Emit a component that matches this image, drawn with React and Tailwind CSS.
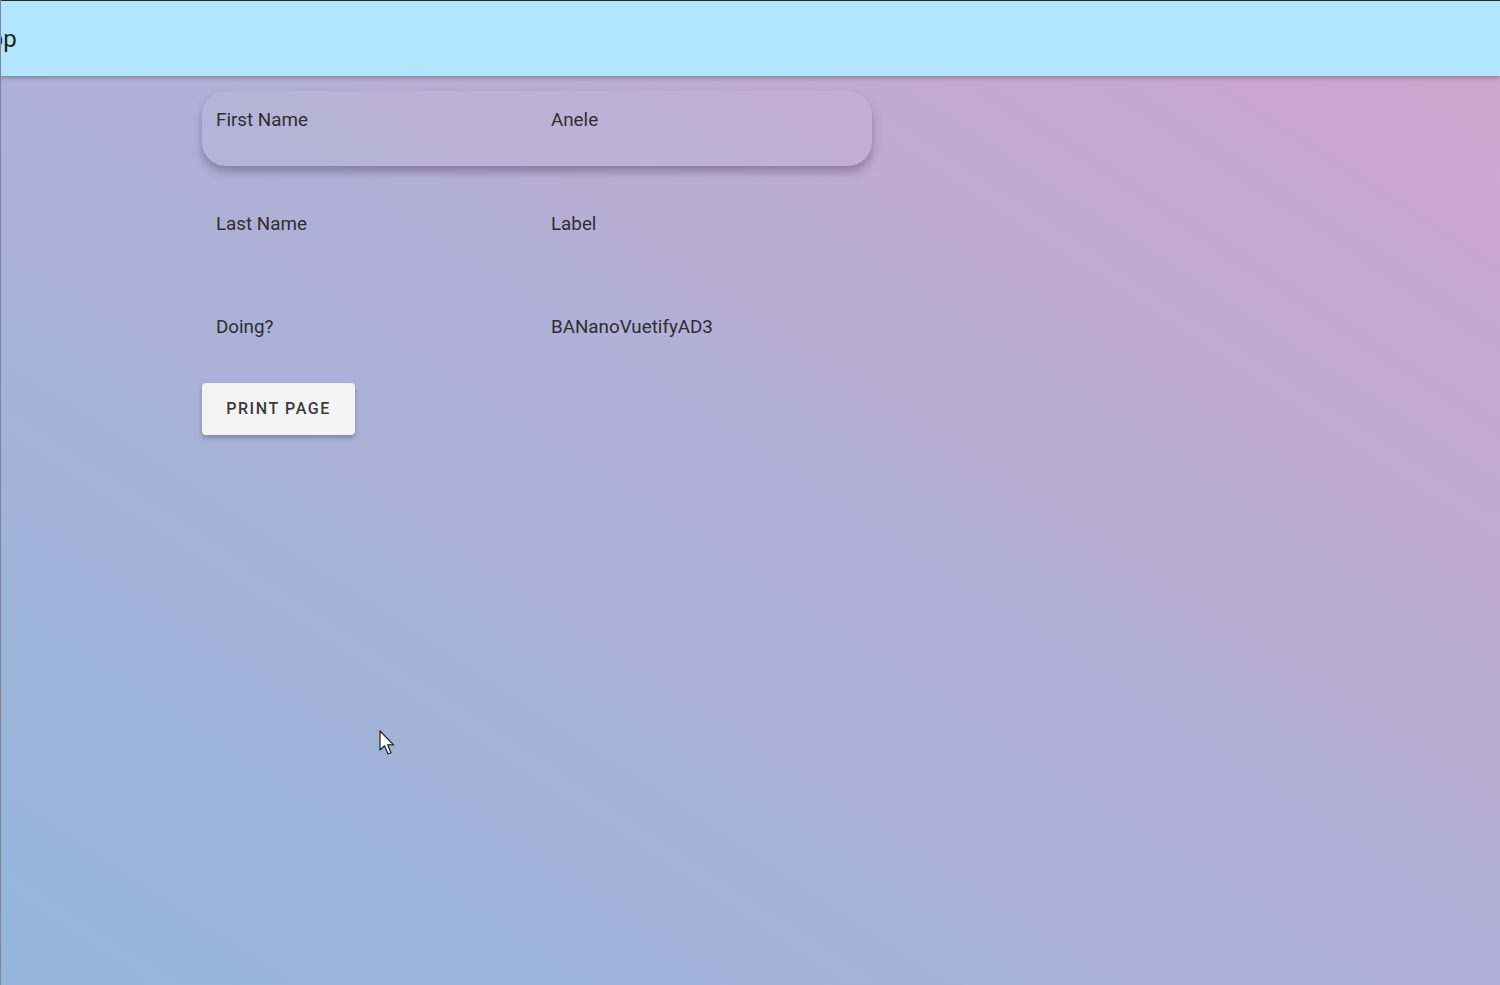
import React from 'react';

const rows = [
  { label: 'First Name', value: 'Anele', raised: true },
  { label: 'Last Name', value: 'Label' },
  { label: 'Doing?', value: 'BANanoVuetifyAD3' },
];

const Cursor = () => (
  <svg width="18" height="26" viewBox="0 0 18 26" className="absolute left-[378px] top-[730px]">
    <path
      d="M1 1 L1 20 L5.5 15.8 L9 24 L12 22.7 L8.6 14.8 L14.6 14.8 Z"
      fill="#fff"
      stroke="#222"
      strokeWidth="1.2"
      strokeLinejoin="round"
    />
  </svg>
);

export default function App() {
  return (
    <div className="relative w-[1500px] h-[985px] overflow-hidden bg-linear-to-tr from-[#92b6da] via-[#b0b0d6] to-[#d1a4cc] border-l border-[#7d8797] font-['Roboto','Liberation_Sans',sans-serif] text-[#2e2e33]">
      {/* App bar */}
      <header className="relative z-10 h-[76px] bg-[#b3e5fc] border-t border-[#2a2a2e] flex items-center overflow-hidden shadow-[0_2px_4px_rgba(0,0,0,0.25)]">
        <span className="-ml-[27px] text-[24px] leading-none text-[#222]">App</span>
      </header>

      {/* Content */}
      <main className="pl-[201px] pt-[15px]">
        <div className="w-[670px] flex flex-col gap-[28.5px]">
          {rows.map((r) => (
            <div
              key={r.label}
              className={
                r.raised
                  ? 'h-[75px] grid grid-cols-[335px_1fr] px-[14px] pt-[16px] rounded-[24px] bg-white/5 shadow-[0_6px_10px_rgba(60,40,80,0.35)]'
                  : 'h-[75px] grid grid-cols-[335px_1fr] px-[14px] pt-[16px]'
              }
            >
              <div className="text-[18.8px] leading-[27px]">{r.label}</div>
              <div className="text-[18.8px] leading-[27px]">{r.value}</div>
            </div>
          ))}
        </div>

        <button className="mt-[10px] h-[52px] w-[153px] rounded-[4px] bg-[#f4f4f4] text-[16px] font-medium tracking-[0.1em] text-[#3a3a3e] shadow-[0_3px_4px_rgba(40,40,80,0.3)]">
          PRINT PAGE
        </button>
      </main>

      <Cursor />
    </div>
  );
}
